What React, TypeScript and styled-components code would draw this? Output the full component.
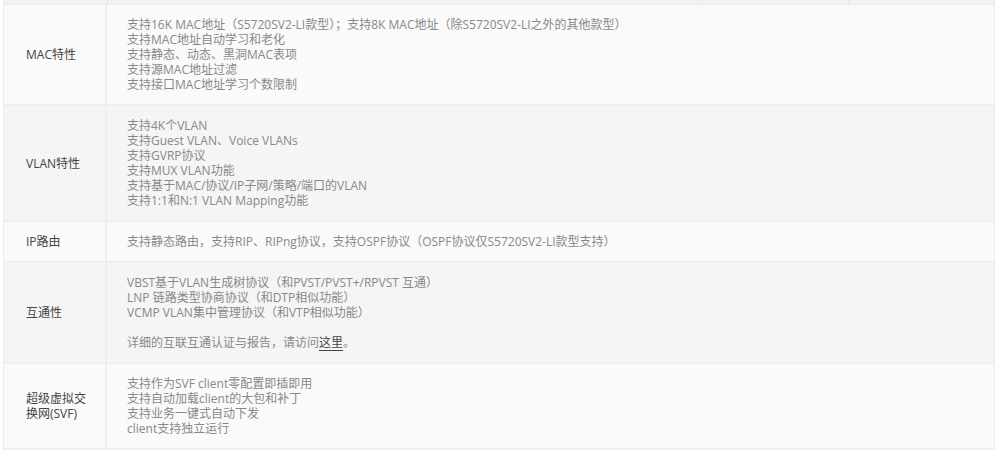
import React from 'react';
import styled, { createGlobalStyle } from 'styled-components';

const GlobalStyle = createGlobalStyle`
  html, body {
    margin: 0;
    padding: 0;
    background: #ffffff;
  }
  body {
    font-family: "Open Sans", "Noto Sans CJK SC", sans-serif;
  }
`;

const Page = styled.div`
  padding: 0 5px 0 3px;
`;

const Table = styled.div`
  display: flex;
  flex-direction: column;
  border-left: 1px solid #ebebeb;
  border-right: 1px solid #ebebeb;
  font-size: 12px;
  line-height: 15px;
`;

const TopStrip = styled.div`
  display: grid;
  grid-template-columns: 103px 594px 147px 1fr;
  height: 4px;
  background: #f2f2f2;
  border-bottom: 1px solid #e9e9e9;

  & > div + div {
    border-left: 1px solid #e6e6e6;
  }
`;

const Row = styled.div<{ $shade: boolean }>`
  display: grid;
  grid-template-columns: 103px 1fr;
  background: ${({ $shade }) => ($shade ? '#f5f5f5' : '#fafafa')};
  border-bottom: 2px solid #efefef;
`;

const Label = styled.div`
  display: flex;
  align-items: center;
  padding: 0 8px 0 22px;
  color: #444;
  border-right: 2px solid #efefef;
`;

const Content = styled.div`
  padding: 12px 20px 12px 20px;
  color: #888;
`;

const Line = styled.div`
  white-space: nowrap;
  min-height: 15px;
`;

const Link = styled.a`
  color: #444;
  text-decoration: underline;
  text-underline-offset: 3px;
`;

const rows: { label: React.ReactNode; lines: React.ReactNode[] }[] = [
  {
    label: 'MAC特性',
    lines: [
      '支持16K MAC地址（S5720SV2-LI款型）；支持8K MAC地址（除S5720SV2-LI之外的其他款型）',
      '支持MAC地址自动学习和老化',
      '支持静态、动态、黑洞MAC表项',
      '支持源MAC地址过滤',
      '支持接口MAC地址学习个数限制',
    ],
  },
  {
    label: 'VLAN特性',
    lines: [
      '支持4K个VLAN',
      '支持Guest VLAN、Voice VLANs',
      '支持GVRP协议',
      '支持MUX VLAN功能',
      '支持基于MAC/协议/IP子网/策略/端口的VLAN',
      '支持1:1和N:1 VLAN Mapping功能',
    ],
  },
  {
    label: 'IP路由',
    lines: ['支持静态路由，支持RIP、RIPng协议，支持OSPF协议（OSPF协议仅S5720SV2-LI款型支持）'],
  },
  {
    label: '互通性',
    lines: [
      'VBST基于VLAN生成树协议（和PVST/PVST+/RPVST 互通）',
      'LNP 链路类型协商协议（和DTP相似功能）',
      'VCMP VLAN集中管理协议（和VTP相似功能）',
      '',
      <>
        详细的互联互通认证与报告，请访问<Link href="#">这里</Link>。
      </>,
    ],
  },
  {
    label: (
      <span>
        超级虚拟交
        <br />
        换网(SVF)
      </span>
    ),
    lines: [
      '支持作为SVF client零配置即插即用',
      '支持自动加载client的大包和补丁',
      '支持业务一键式自动下发',
      'client支持独立运行',
    ],
  },
];

export default function App() {
  return (
    <Page>
      <GlobalStyle />
      <Table>
        <TopStrip>
          <div />
          <div />
          <div />
          <div />
        </TopStrip>
        {rows.map((row, i) => (
          <Row key={i} $shade={i % 2 === 1}>
            <Label>{row.label}</Label>
            <Content>
              {row.lines.map((line, j) => (
                <Line key={j}>{line}</Line>
              ))}
            </Content>
          </Row>
        ))}
      </Table>
    </Page>
  );
}
